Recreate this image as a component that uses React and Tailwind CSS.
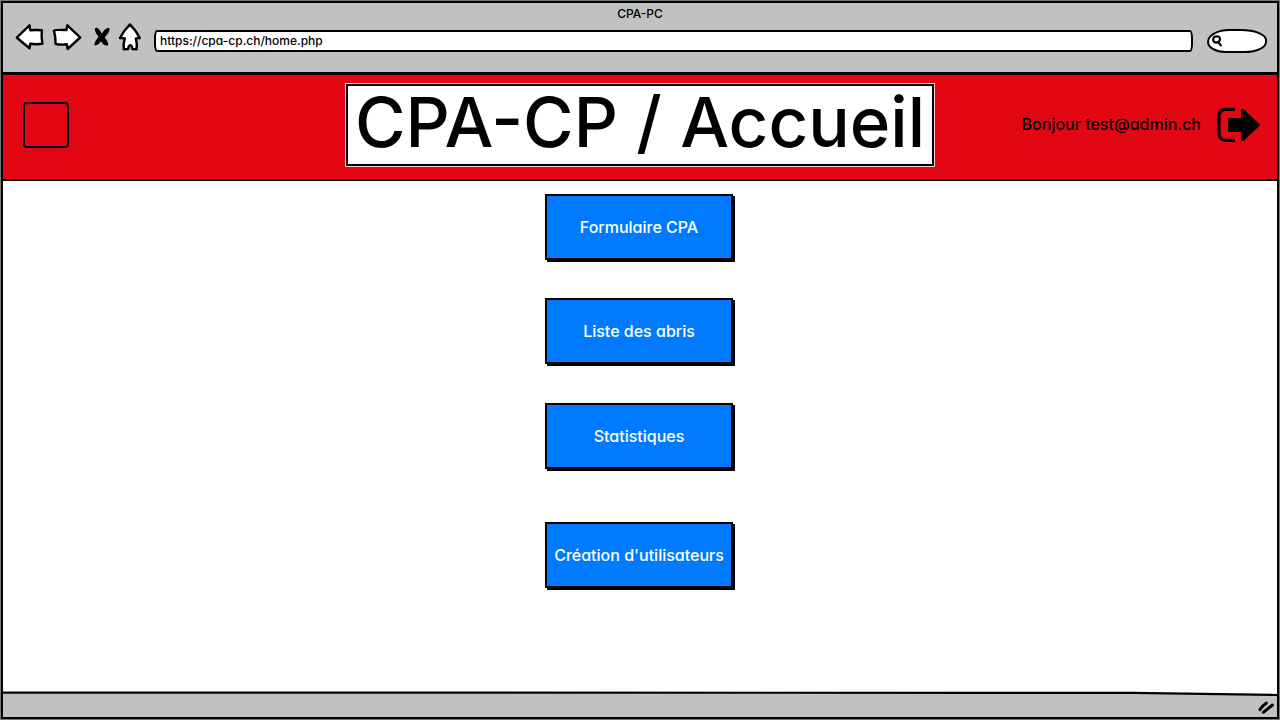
const links = [
  { label: 'Formulaire CPA', spacing: '' },
  { label: 'Liste des abris', spacing: 'mt-[38px]' },
  { label: 'Statistiques', spacing: 'mt-[39px]' },
  { label: "Création d'utilisateurs", spacing: 'mt-[53px]' },
];

const outline = {
  fill: 'white',
  stroke: 'black',
  strokeWidth: 2.4,
  strokeLinejoin: 'round',
  strokeLinecap: 'round',
};

function BackIcon() {
  return (
    <svg width="30" height="30" viewBox="15 22 30 30" aria-hidden="true" {...outline}>
      <path d="M16.8 37.5 29.5 25.3 30.2 30.2Q36 29.8 41.8 30.2 41.2 37 42.4 43.8 36.5 44.6 30.2 43.8L29.6 48.2Q23 43.2 16.8 37.5Z" />
    </svg>
  );
}

function ForwardIcon() {
  return (
    <svg width="30" height="30" viewBox="52 22 30 30" aria-hidden="true" {...outline}>
      <path d="M54 30.6Q54.5 29.8 66.4 30L67.4 25.3Q74 31.5 80.2 37.5L67.6 49 66.8 44.2Q61 45.2 55.6 43.8 55.6 37 54 30.6Z" />
    </svg>
  );
}

function StopIcon() {
  return (
    <svg width="18" height="22" viewBox="93 25 18 22" aria-hidden="true">
      <path d="M94.8 27.4Q97.8 24.8 101.8 32.4 106.4 25.8 109.8 27.4 109.2 31.8 104.6 36.4 108.6 41 108.2 44.2 104 45.4 100.8 40.2 97.8 45.2 94.4 44 94.4 40.4 98.6 36 94.6 31 94.8 27.4Z" />
    </svg>
  );
}

function HomeIcon() {
  return (
    <svg width="24" height="30" viewBox="118 22 24 30" aria-hidden="true" {...outline}>
      <path d="M130 24.4Q136.4 31 139.8 38L135.8 38.4Q137.4 44 136.6 49.2L132.2 49Q132 45.4 130.4 45.2 128.4 45.4 128.2 49L123.8 49.2Q123 44 124.8 38.4L120 38Q123.8 30.5 130 24.4Z" />
    </svg>
  );
}

function LogoutIcon() {
  return (
    <svg width="44" height="36" viewBox="1217 107 44 36" aria-hidden="true">
      <path
        d="M1235 109.4H1225Q1219 109.8 1219 116V133.5Q1219.4 139.8 1225 140.4H1235"
        fill="none"
        stroke="black"
        strokeWidth="3.2"
      />
      <path d="M1229.5 118H1241V110Q1241.4 108.2 1243.4 109L1259.6 124.2Q1260.2 125 1259.6 125.8L1244 140.6Q1241.4 141.6 1241 139.8V132H1229.5Q1228 132 1228 130.6V119.4Q1228 118 1229.5 118Z" />
    </svg>
  );
}

function Toolbar() {
  return (
    <header className="h-[72px] border-b-[3px] border-black bg-[#c1c1c1]">
      <p className="h-[18px] text-center text-xs leading-[22px] font-medium">CPA-PC</p>
      <div className="flex items-center pr-2.5 pl-3">
        <nav aria-label="Navigateur" className="flex h-8 items-center">
          <button aria-label="Précédent"><BackIcon /></button>
          <button aria-label="Suivant" className="ml-[7px]"><ForwardIcon /></button>
          <button aria-label="Arrêter" className="ml-[11px]"><StopIcon /></button>
          <button aria-label="Accueil" className="ml-[7px]"><HomeIcon /></button>
        </nav>
        <input
          aria-label="Adresse"
          defaultValue="https://cpa-cp.ch/home.php"
          className="mt-2 ml-3 h-[22px] min-w-0 flex-1 rounded-[3px/8px] border-2 border-black bg-white px-1 pb-0.5 text-xs font-medium outline-none"
        />
        <label className="mt-2 ml-3.5 flex h-6 w-15 items-center rounded-[24px_28px_24px_20px/14px_12px_12px_12px] border-2 border-black bg-white pl-0.5">
          <svg width="12" height="14" viewBox="0 0 12 14" fill="none" stroke="black" strokeWidth="2.2" strokeLinecap="round" aria-hidden="true">
            <path d="M5.4 2.4Q8.8 2 9 5 8.8 8.2 5.6 8.6 2 8.4 2.2 5.2 2.6 2.6 5.4 2.4ZM7.4 8.4 9.8 11.4" />
          </svg>
          <input type="search" aria-label="Rechercher" className="w-8 bg-transparent text-xs outline-none" />
        </label>
      </div>
    </header>
  );
}

function Banner() {
  return (
    <div className="grid h-[106px] grid-cols-[1fr_auto_1fr] items-center border-b-2 border-black bg-[#e30613] px-4 pb-1">
      <button aria-label="Menu" className="ml-1 size-[46px] rounded border-2 border-black" />
      <h1 className="flex h-[82px] w-147 items-center justify-center border-2 border-black bg-white pb-1.5 text-[69px] leading-none font-medium whitespace-nowrap outline-1 outline-white/80">
        CPA-CP / Accueil
      </h1>
      <div className="flex items-center justify-end gap-4">
        <span className="pb-0.5 text-base font-medium whitespace-nowrap">Bonjour test@admin.ch</span>
        <button aria-label="Se déconnecter"><LogoutIcon /></button>
      </div>
    </div>
  );
}

function StatusBar() {
  return (
    <footer className="flex h-[26px] flex-col bg-[#c1c1c1]">
      <svg className="h-1.5 w-full" viewBox="0 0 1274 6" preserveAspectRatio="none" aria-hidden="true">
        <path d="M0 0H1274V4L1130 1.8H0Z" fill="white" />
        <path d="M0 1.6Q500 2.6 1130 1.8L1274 4" fill="none" stroke="black" strokeWidth="2.2" />
      </svg>
      <svg className="mt-0.5 mr-px self-end" width="18" height="16" viewBox="1258 699 18 16" fill="none" stroke="black" strokeWidth="3" strokeLinecap="round" aria-hidden="true">
        <path d="M1260 709.6Q1262 706 1266.4 703M1263.4 712.4 1272.4 705" />
      </svg>
    </footer>
  );
}

export default function App() {
  return (
    <div className="flex min-h-screen bg-[#777] p-px font-['Inter','Liberation_Sans',sans-serif] text-black [font-feature-settings:'cv11']">
      <div className="flex min-w-0 flex-1 flex-col border-2 border-black bg-white">
        <Toolbar />
        <Banner />
        <main className="flex flex-1 flex-col items-center pt-[13px] pr-0.5">
          {links.map(({ label, spacing }) => (
            <a
              key={label}
              href="#"
              className={`flex h-[66px] w-[188px] items-center justify-center border-2 border-black bg-[#007bff] text-base font-medium whitespace-nowrap text-white shadow-[2px_2px_0_black] ${spacing}`}
            >
              {label}
            </a>
          ))}
        </main>
        <StatusBar />
      </div>
    </div>
  );
}
